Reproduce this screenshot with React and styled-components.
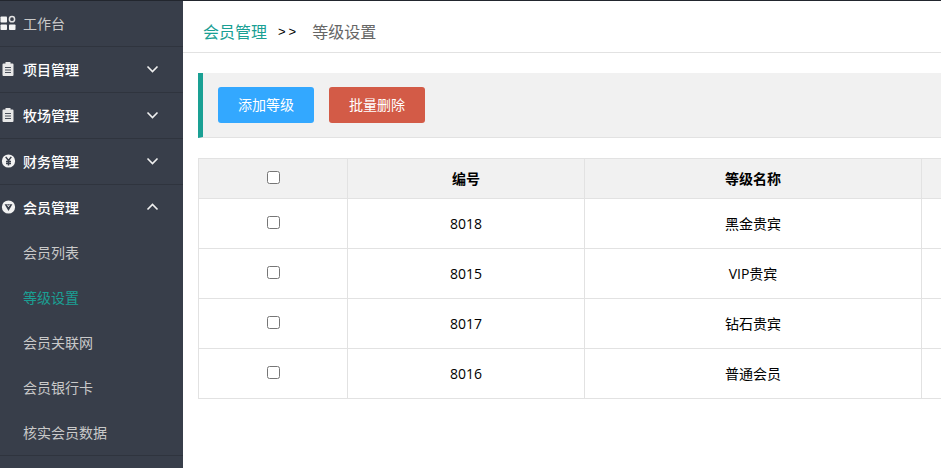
import React from 'react';
import styled, { createGlobalStyle } from 'styled-components';

const GlobalStyle = createGlobalStyle`
  html, body {
    margin: 0;
    padding: 0;
    height: 100%;
    overflow: hidden;
    background: #fff;
  }
  #root {
    height: 100%;
  }
`;

const WorkIcon = () => (
  <svg width="16" height="16" viewBox="0 0 16 16">
    <rect x="0.5" y="1.5" width="6.5" height="6" rx="0.8" fill="#f4f4f4" />
    <circle cx="12" cy="4.2" r="2.6" fill="none" stroke="#e4e4e4" strokeWidth="1.5" />
    <rect x="0.5" y="9.5" width="6.5" height="5.5" rx="0.8" fill="#f4f4f4" />
    <rect x="9" y="9.5" width="6.5" height="5.5" rx="0.8" fill="#f4f4f4" />
  </svg>
);

const ClipIcon = () => (
  <svg width="16" height="16" viewBox="0 0 16 16">
    <path d="M3.5 2.5H5.5V1H10.5V2.5H12.5A1 1 0 0 1 13.5 3.5V14A1 1 0 0 1 12.5 15H3.5A1 1 0 0 1 2.5 14V3.5A1 1 0 0 1 3.5 2.5z" fill="#e8e8e8" />
    <path d="M5 6.5h6M5 9h6M5 11.5h6" stroke="#4a505b" strokeWidth="1.1" />
  </svg>
);

const YuanIcon = () => (
  <svg width="16" height="16" viewBox="0 0 16 16">
    <circle cx="8.5" cy="8" r="6.6" fill="#f2f2f2" />
    <path d="M5.7 3.9L8.5 7.5l2.8-3.6M8.5 7.5v5M6 8.5h5M6 10.5h5" stroke="#383e4a" strokeWidth="1.5" fill="none" />
  </svg>
);

const VipIcon = () => (
  <svg width="16" height="16" viewBox="0 0 16 16">
    <circle cx="8.5" cy="8" r="6.6" fill="#f2f2f2" />
    <path d="M4.6 5.3h7.8L8.5 12.1z" fill="#383e4a" />
    <path d="M7.4 5.7L8.5 7.7l1.1-2" stroke="#f2f2f2" strokeWidth="1" fill="none" />
  </svg>
);

const Chevron = ({ up }) => (
  <svg width="13" height="8" viewBox="0 0 13 8">
    <path d={up ? 'M1.5 6.5l5-5 5 5' : 'M1.5 1.5l5 5 5-5'} stroke="#f0f0f0" strokeWidth="1.6" fill="none" />
  </svg>
);

const menus = [
  { name: '项目管理', icon: <ClipIcon /> },
  { name: '牧场管理', icon: <ClipIcon /> },
  { name: '财务管理', icon: <YuanIcon /> },
  { name: '会员管理', icon: <VipIcon />, open: true },
];

const subMenus = ['会员列表', '等级设置', '会员关联网', '会员银行卡', '核实会员数据'];

const rows = [
  { id: '8018', name: '黑金贵宾' },
  { id: '8015', name: 'VIP贵宾' },
  { id: '8017', name: '钻石贵宾' },
  { id: '8016', name: '普通会员' },
];

const App = () => {
  return (
    <Page>
      <GlobalStyle />
      <Sidebar>
        <HomeItem>
          <IconSlot><WorkIcon /></IconSlot>
          工作台
        </HomeItem>
        {menus.map((m) => (
          <MenuItem key={m.name} $open={m.open}>
            <IconSlot>{m.icon}</IconSlot>
            <MenuLabel>{m.name}</MenuLabel>
            <Chevron up={m.open} />
          </MenuItem>
        ))}
        <SubList>
          {subMenus.map((s) => (
            <SubItem key={s} $active={s === '等级设置'}>{s}</SubItem>
          ))}
        </SubList>
      </Sidebar>
      <Main>
        <Crumbs>
          <CrumbLink>会员管理</CrumbLink>
          <CrumbSep>&gt;&gt;</CrumbSep>
          <CrumbNow>等级设置</CrumbNow>
        </Crumbs>
        <Toolbar>
          <ActionButton $color="#33a8ff">添加等级</ActionButton>
          <ActionButton $color="#d35b47">批量删除</ActionButton>
        </Toolbar>
        <Table>
          <thead>
            <tr>
              <HeadCell $width={148} $flush><Check type="checkbox" /></HeadCell>
              <HeadCell $width={236}>编号</HeadCell>
              <HeadCell $width={336}>等级名称</HeadCell>
              <HeadCell />
            </tr>
          </thead>
          <tbody>
            {rows.map((r) => (
              <tr key={r.id}>
                <Cell $flush><Check type="checkbox" /></Cell>
                <Cell $flush>{r.id}</Cell>
                <Cell>{r.name}</Cell>
                <Cell />
              </tr>
            ))}
          </tbody>
        </Table>
      </Main>
    </Page>
  );
};

const font = `"Noto Sans CJK SC", sans-serif`;

const Page = styled.div`
  display: flex;
  width: 941px;
  height: 468px;
  overflow: hidden;
  font-family: ${font};
  font-size: 14px;
  border-top: 1px solid #22262e;
  box-sizing: border-box;
`;

const Sidebar = styled.div`
  width: 183px;
  flex-shrink: 0;
  background: #383e4a;
`;

const HomeItem = styled.div`
  display: flex;
  align-items: center;
  box-sizing: border-box;
  height: 46px;
  padding-bottom: 2px;
  color: #c9c9c9;
  border-bottom: 1px solid #2f343e;
`;

const MenuItem = styled.div`
  display: flex;
  align-items: center;
  box-sizing: border-box;
  height: ${(p) => (p.$open ? '45px' : '46px')};
  padding-right: 24px;
  padding-bottom: ${(p) => (p.$open ? '1px' : '2px')};
  color: #fff;
  font-weight: 500;
  border-bottom: ${(p) => (p.$open ? 'none' : '1px solid #2f343e')};
`;

const IconSlot = styled.span`
  display: flex;
  width: 23px;
  flex-shrink: 0;
`;

const MenuLabel = styled.span`
  flex: 1;
`;

const SubList = styled.div`
  border-bottom: 1px solid #2f343e;
`;

const SubItem = styled.div`
  display: flex;
  align-items: center;
  box-sizing: border-box;
  height: 45px;
  padding-left: 23px;
  padding-bottom: 2px;
  color: ${(p) => (p.$active ? '#1aa094' : '#c9c9c9')};
`;

const Main = styled.div`
  flex: 1;
  min-width: 0;
  background: #fff;
`;

const Crumbs = styled.div`
  display: flex;
  align-items: center;
  box-sizing: border-box;
  height: 52px;
  padding: 9px 0 0 20px;
  font-size: 16px;
  border-bottom: 1px solid #e2e2e2;
`;

const CrumbLink = styled.span`
  color: #1aa094;
`;

const CrumbSep = styled.span`
  margin: 0 13px 0 11px;
  color: #000;
  font-family: "Liberation Sans", sans-serif;
  font-size: 13px;
  letter-spacing: 3px;
`;

const CrumbNow = styled.span`
  color: #666;
`;

const Toolbar = styled.div`
  display: flex;
  align-items: center;
  gap: 15px;
  box-sizing: border-box;
  height: 65px;
  margin: 20px 0 20px 15px;
  padding-left: 15px;
  background: #f1f1f1;
  border-left: 5px solid #1aa094;
  border-bottom: 1px solid #e2e2e2;
`;

const ActionButton = styled.div`
  display: flex;
  align-items: center;
  justify-content: center;
  box-sizing: border-box;
  width: 96px;
  height: 36px;
  padding-bottom: 2px;
  border-radius: 3px;
  color: #fff;
  font-size: 14px;
  background: ${(p) => p.$color};
`;

const Table = styled.table`
  width: 758px;
  margin-left: 15px;
  border-collapse: collapse;
  table-layout: fixed;
  font-family: "Open Sans", "Noto Sans CJK SC", sans-serif;
  font-size: 14px;
  color: #000;
`;

const HeadCell = styled.th`
  height: 37px;
  padding: 0 0 ${(p) => (p.$flush ? '0' : '2px')};
  background: #f1f1f1;
  border: 1px solid #e2e2e2;
  font-weight: 700;
  text-align: center;
  ${(p) => p.$width && `width: ${p.$width}px;`}
`;

const Cell = styled.td`
  height: 47px;
  padding: 0 0 ${(p) => (p.$flush ? '0' : '2px')};
  border: 1px solid #e2e2e2;
  text-align: center;
`;

const Check = styled.input`
  width: 13px;
  height: 13px;
  margin: 0;
`;

export default App;
